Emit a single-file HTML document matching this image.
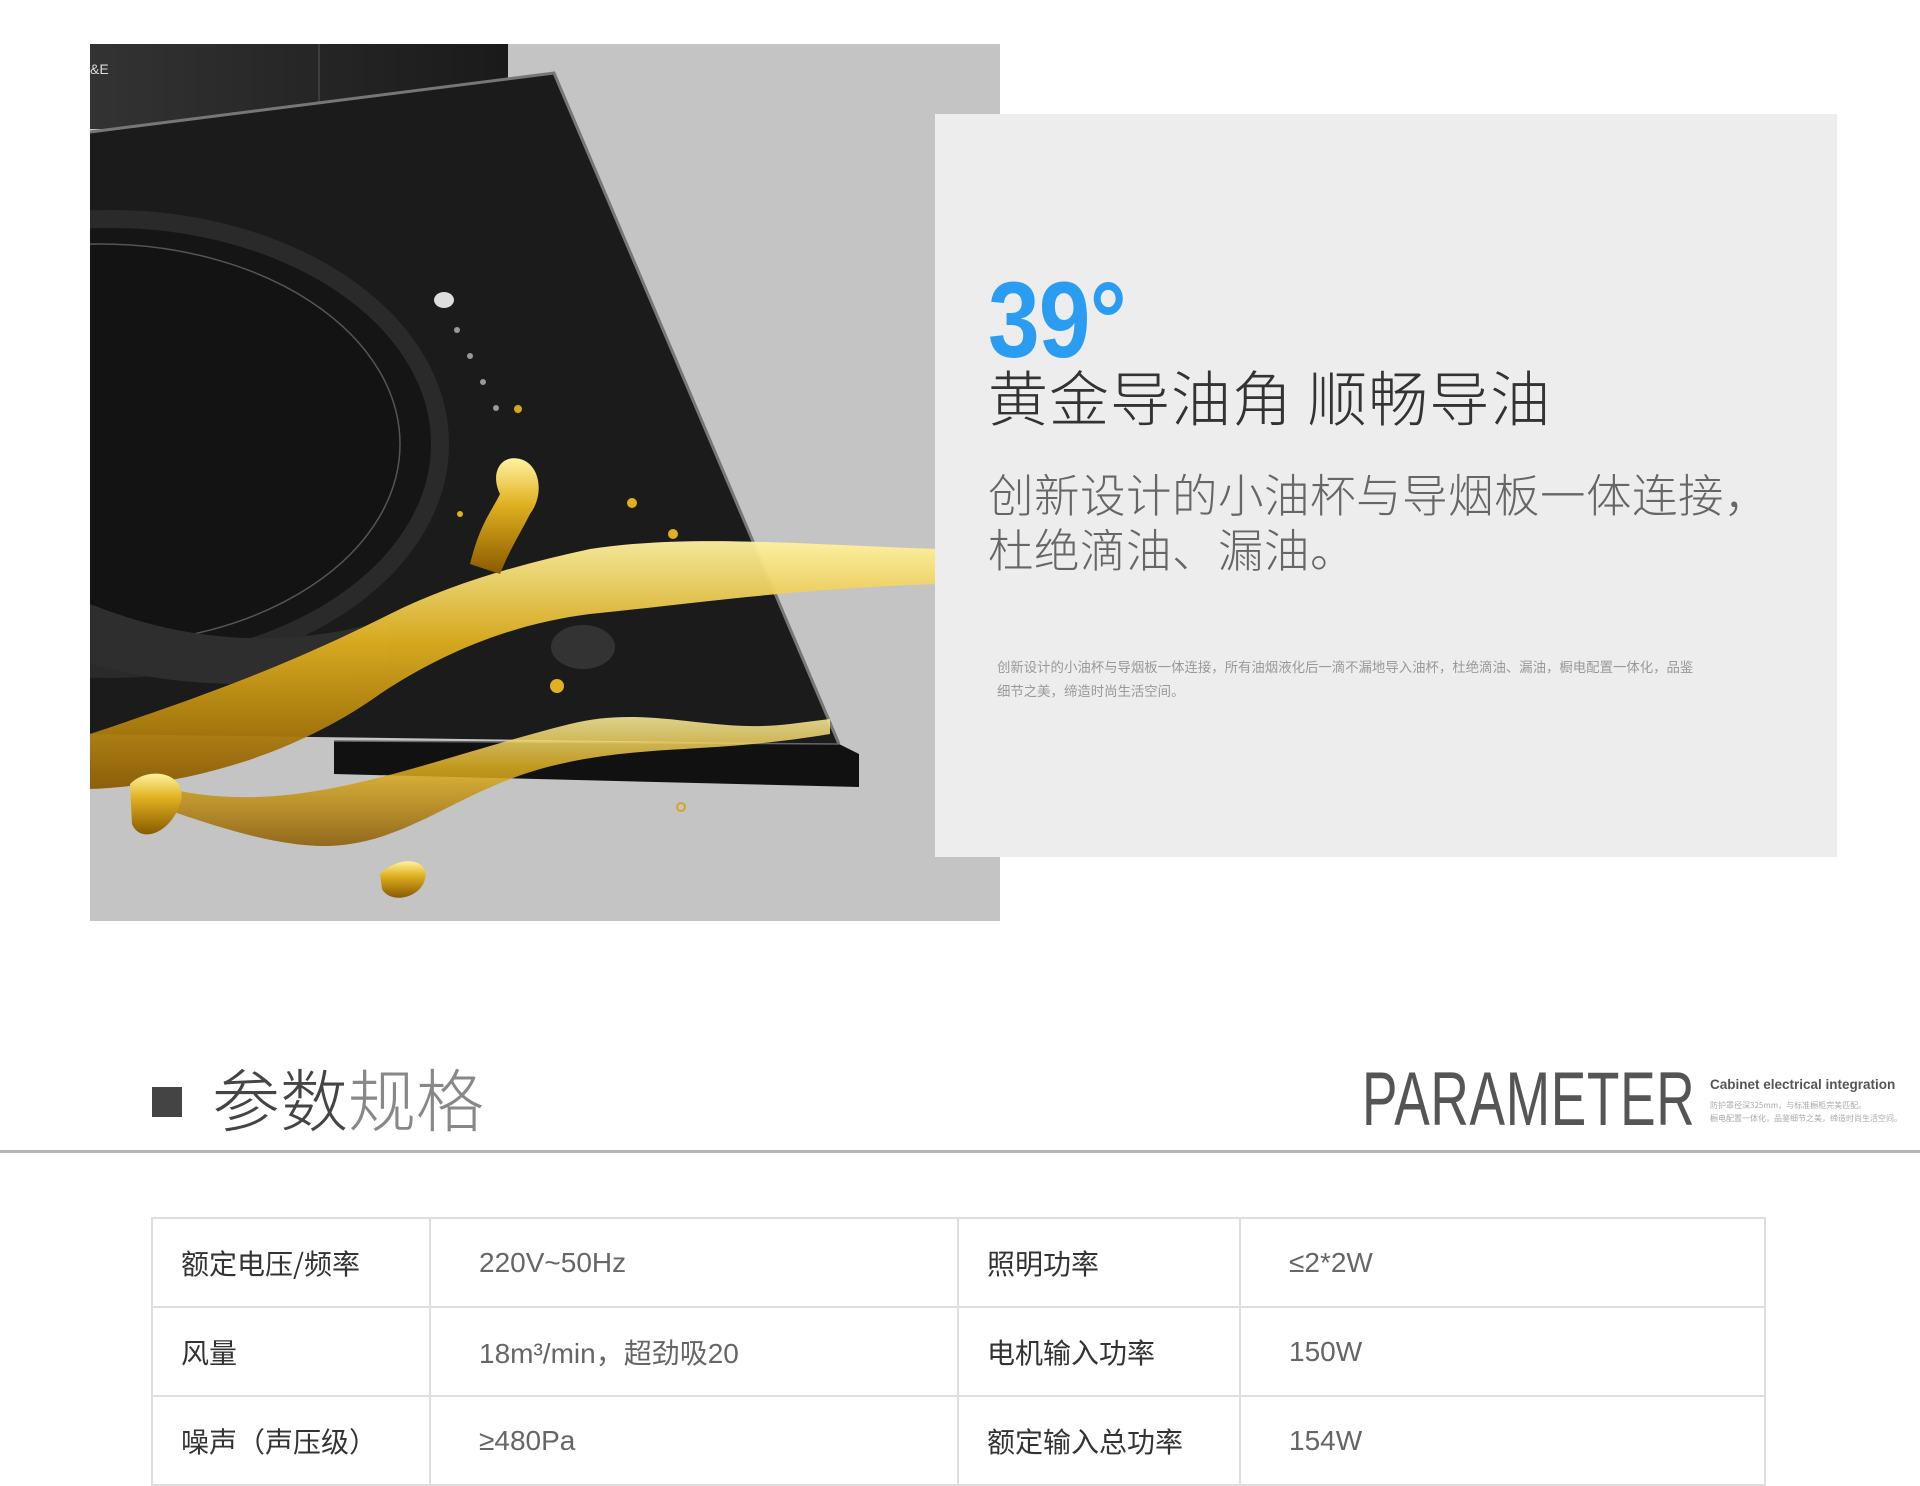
<!DOCTYPE html>
<html><head><meta charset="utf-8"><style>
*{margin:0;padding:0;box-sizing:border-box}
body{width:1920px;height:1460px;background:#fff;position:relative;overflow:hidden;font-family:"Liberation Sans","Noto Sans CJK SC",sans-serif}
.abs{position:absolute}
.panel{left:935px;top:114px;width:902px;height:743px;background:#ededed}
.t39{left:988px;top:266px;font-size:108px;font-weight:bold;color:#2a9df2;line-height:1;transform:scaleX(0.86);transform-origin:left top;letter-spacing:-1px}
.title{left:988px;top:360px;font-size:60px;color:#333;line-height:1.2;white-space:nowrap;font-family:"Noto Sans CJK SC",sans-serif;font-weight:300;letter-spacing:1px}
.para{left:988px;top:466px;font-size:45.5px;color:#666;line-height:55px;white-space:nowrap;font-family:"Noto Sans CJK SC",sans-serif;font-weight:300;letter-spacing:0.5px}
.small{left:997px;top:654px;font-size:13.4px;color:#999;line-height:24px;width:768px;font-family:"Noto Sans CJK SC",sans-serif}
table{position:absolute;left:151px;top:1217px;width:1615px;border-collapse:collapse}
td{border:2px solid #dedede;height:89px;font-size:28px;font-family:"Liberation Sans","Noto Sans CJK SC",sans-serif;padding-left:28px}
td.l{color:#333;width:278px;font-family:"Noto Sans CJK SC",sans-serif}
td.v{color:#666;padding-left:48px;width:528px}
td.l2{color:#333;width:282px;font-family:"Noto Sans CJK SC",sans-serif}
td.v2{color:#666;padding-left:48px}
</style></head><body>
<svg class="abs" style="left:90px;top:44px" width="910" height="877" viewBox="0 0 910 877">
<defs>
<linearGradient id="g" x1="0" y1="0" x2="0" y2="1"><stop offset="0" stop-color="#fff2a0"/><stop offset="0.4" stop-color="#e0b020"/><stop offset="1" stop-color="#8a5a00"/></linearGradient>
<linearGradient id="hood" x1="0" y1="0" x2="1" y2="0"><stop offset="0" stop-color="#333"/><stop offset="1" stop-color="#1a1a1a"/></linearGradient>
</defs>
<rect width="910" height="877" fill="#c4c4c4"/>
<rect x="0" y="0" width="418" height="85" fill="url(#hood)"/>
<line x1="229" y1="0" x2="229" y2="60" stroke="#555" stroke-width="1"/>
<text x="0" y="30" font-size="14" fill="#ddd" font-family="Liberation Sans">&amp;E</text>
<polygon points="0,88 464,29 749,700 0,690" fill="#1b1b1b"/>
<polyline points="0,88 464,29 749,700" fill="none" stroke="#777" stroke-width="3"/>
<polygon points="244,697 749,700 769,710 769,743 244,730" fill="#111"/>
<line x1="244" y1="697" x2="749" y2="700" stroke="#666" stroke-width="1.5"/>
<ellipse cx="20" cy="400" rx="330" ry="225" fill="#151515" stroke="#2a2a2a" stroke-width="18"/>
<ellipse cx="10" cy="400" rx="300" ry="200" fill="#131313" stroke="#555" stroke-width="1.5"/>
<path d="M0,560 Q150,620 300,575 L300,620 Q150,660 0,620 Z" fill="#2e2e2e"/>
<ellipse cx="493" cy="603" rx="32" ry="22" fill="#333"/>
<ellipse cx="354" cy="256" rx="10" ry="8" fill="#ddd"/>
<circle cx="367" cy="286" r="3" fill="#999"/><circle cx="380" cy="312" r="3" fill="#999"/><circle cx="393" cy="338" r="3" fill="#999"/><circle cx="406" cy="364" r="3" fill="#999"/>
<circle cx="428" cy="365" r="4" fill="#d9a520"/>
<path d="M0,690 C120,650 200,620 300,570 C360,540 430,520 500,505 C600,490 700,500 848,505 L848,540 C700,545 600,560 500,570 C420,580 350,610 290,650 C220,700 120,740 0,745 Z" fill="url(#g)" opacity="0.95"/>
<path d="M380,520 C390,480 400,470 410,450 C400,430 410,410 430,415 C450,420 455,450 440,470 C430,490 420,505 410,530 Z" fill="url(#g)"/>
<path d="M60,740 C200,780 320,720 480,680 C560,660 620,690 700,680 L740,675 L740,690 C620,710 560,700 470,720 C380,740 330,790 260,800 C200,810 120,780 60,760 Z" fill="url(#g)" opacity="0.85"/>
<path d="M40,740 C60,720 100,730 90,760 C80,790 50,800 42,780 Z" fill="url(#g)"/>
<path d="M290,830 C310,810 340,815 335,835 C330,855 300,860 292,845 Z" fill="url(#g)"/>
<circle cx="542" cy="459" r="5" fill="#e0b020"/><circle cx="583" cy="490" r="5" fill="#e0b020"/><circle cx="467" cy="642" r="7" fill="#e0b020"/><circle cx="591" cy="763" r="4" fill="none" stroke="#d9a520" stroke-width="2"/><circle cx="370" cy="470" r="3" fill="#e0b020"/>
</svg>
<div class="abs panel"></div>
<div class="abs t39">39°</div>
<div class="abs title">黄金导油角 顺畅导油</div>
<div class="abs para">创新设计的小油杯与导烟板一体连接，<br>杜绝滴油、漏油。</div>
<div class="abs small">创新设计的小油杯与导烟板一体连接，所有油烟液化后一滴不漏地导入油杯，杜绝滴油、漏油，橱电配置一体化，品鉴<br>细节之美，缔造时尚生活空间。</div>
<div class="abs" style="left:152px;top:1087px;width:30px;height:30px;background:#444"></div>
<div class="abs" style="left:212px;top:1052px;font-size:68px;line-height:90px;font-family:'Noto Sans CJK SC',sans-serif;font-weight:300;color:#444;white-space:nowrap">参数<span style="color:#888">规格</span></div>
<div class="abs" style="left:1362px;top:1060px;font-size:76px;line-height:80px;color:#555;transform:scaleX(0.7);transform-origin:left top;white-space:nowrap;letter-spacing:1px">PARAMETER</div>
<div class="abs" style="left:1710px;top:1077px;font-size:13.5px;font-weight:bold;color:#555;white-space:nowrap">Cabinet electrical integration</div>
<div class="abs" style="left:1710px;top:1099px;font-size:8px;line-height:13px;color:#aaa;white-space:nowrap;font-family:'Noto Sans CJK SC',sans-serif">防护罩径深325mm，与标准橱柜完美匹配。<br>橱电配置一体化，品鉴细节之美，缔造时尚生活空间。</div>
<div class="abs" style="left:0;top:1150px;width:1920px;height:3px;background:#b4b4b4"></div>
<table>
<tr><td class="l">额定电压/频率</td><td class="v">220V~50Hz</td><td class="l2">照明功率</td><td class="v2">≤2*2W</td></tr>
<tr><td class="l">风量</td><td class="v">18m³/min，超劲吸20</td><td class="l2">电机输入功率</td><td class="v2">150W</td></tr>
<tr><td class="l">噪声（声压级）</td><td class="v">≥480Pa</td><td class="l2">额定输入总功率</td><td class="v2">154W</td></tr>
</table>
</body></html>
